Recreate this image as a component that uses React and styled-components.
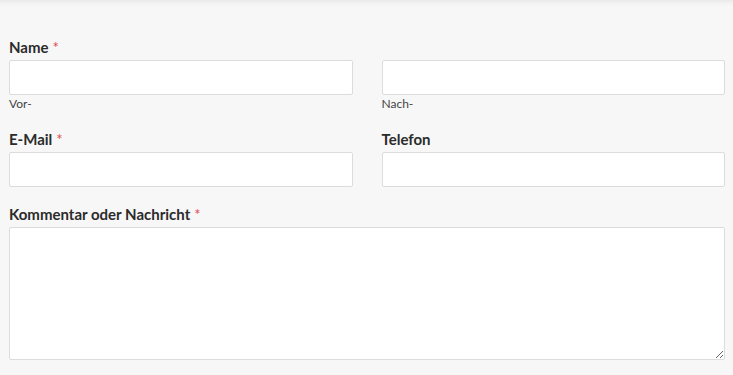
import React from "react";
import styled, { createGlobalStyle } from "styled-components";

const Global = createGlobalStyle`
  html, body { margin: 0; padding: 0; background: #f7f7f7; }
  * { box-sizing: border-box; }
`;

const Page = styled.div`
  min-height: 375px;
  background: linear-gradient(#e9e9e9 0px, #f2f2f2 3px, #f7f7f7 6px);
  padding: 37px 8px 0 9px;
  font-family: Lato, "Open Sans", sans-serif;
`;

const Grid = styled.div`
  display: grid;
  grid-template-columns: 1fr 1fr;
  column-gap: 29px;
  row-gap: 17px;
`;

const Field = styled.div`
  display: flex;
  flex-direction: column;
  grid-column: ${(p) => (p.$wide ? "1 / -1" : "auto")};
`;

const Label = styled.label`
  font-size: 15px;
  line-height: 20px;
  font-weight: 700;
  color: #2b2b2b;
  margin-bottom: 3px;
`;

const Req = styled.span`
  color: #e0474c;
  font-weight: 400;
  margin-left: 4px;
`;

const Input = styled.input`
  height: 35px;
  width: 100%;
  background: #fff;
  border: 1px solid #dcdcdc;
  border-radius: 2px;
  padding: 0 8px;
  font: inherit;
  outline: none;
`;

const TextArea = styled.textarea`
  height: 133px;
  width: 100%;
  background: #fff;
  border: 1px solid #dcdcdc;
  border-radius: 2px;
  padding: 8px;
  font: inherit;
  outline: none;
  display: block;
`;

const Sub = styled.span`
  font-size: 12px;
  line-height: 16px;
  color: #444;
  margin-top: 1px;
`;

export default function App() {
  return (
    <>
      <Global />
      <Page>
        <Grid>
          <Field>
            <Label>
              Name<Req>*</Req>
            </Label>
            <Input />
            <Sub>Vor-</Sub>
          </Field>
          <Field>
            <Label>&nbsp;</Label>
            <Input />
            <Sub>Nach-</Sub>
          </Field>
          <Field>
            <Label>
              E-Mail<Req>*</Req>
            </Label>
            <Input type="email" />
          </Field>
          <Field>
            <Label>Telefon</Label>
            <Input type="tel" />
          </Field>
          <Field $wide>
            <Label>
              Kommentar oder Nachricht<Req>*</Req>
            </Label>
            <TextArea />
          </Field>
        </Grid>
      </Page>
    </>
  );
}
